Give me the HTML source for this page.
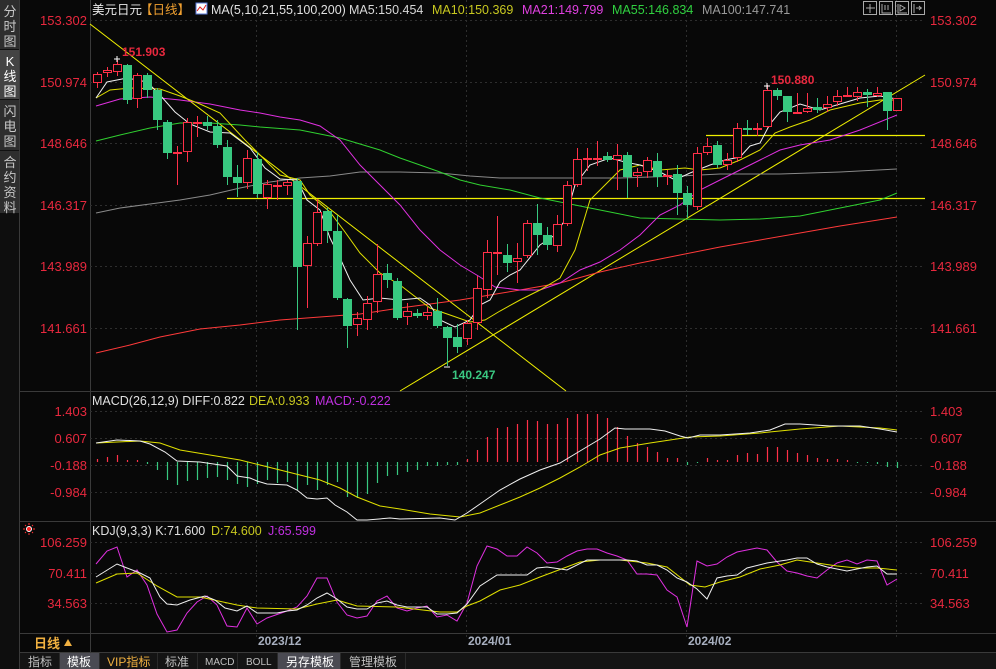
<!DOCTYPE html>
<html><head><meta charset="utf-8">
<style>
html,body{margin:0;padding:0;background:#080808;}
body{width:996px;height:669px;overflow:hidden;position:relative;font-family:"Liberation Sans","Noto Sans CJK SC",sans-serif;}
svg{position:absolute;left:0;top:0;}
text{font-family:"Liberation Sans","Noto Sans CJK SC",sans-serif;}
.ax{fill:#e8283e;font-size:13px;}
</style></head><body>
<svg width="996" height="669" viewBox="0 0 996 669" xmlns="http://www.w3.org/2000/svg">
<rect width="996" height="669" fill="#080808"/>
<rect x="0" y="0" width="20" height="669" fill="#2e2e2e"/>
<rect x="0" y="50" width="20" height="49" fill="#444"/>
<line x1="0" y1="49.5" x2="20" y2="49.5" stroke="#111"/>
<line x1="0" y1="99.5" x2="20" y2="99.5" stroke="#111"/>
<line x1="0" y1="150.5" x2="20" y2="150.5" stroke="#111"/>
<rect x="0" y="213" width="20" height="456" fill="#0e0e0e"/>
<rect x="19" y="0" width="1" height="669" fill="#3a3a3a"/>
<g fill="#c8c8c8" font-size="13" text-anchor="middle">
<text x="10" y="16">分</text><text x="10" y="31">时</text><text x="10" y="46">图</text>
<text x="10" y="66" fill="#fff">K</text><text x="10" y="81" fill="#fff">线</text><text x="10" y="96" fill="#fff">图</text>
<text x="10" y="116">闪</text><text x="10" y="131">电</text><text x="10" y="146">图</text>
<text x="10" y="167">合</text><text x="10" y="182">约</text><text x="10" y="197">资</text><text x="10" y="212">料</text>
</g>
<g stroke="#3a3a3a" fill="none">
<line x1="90.5" y1="0" x2="90.5" y2="652"/>
<line x1="20" y1="391.5" x2="996" y2="391.5"/>
<line x1="20" y1="521.5" x2="996" y2="521.5"/>
<line x1="20" y1="633.5" x2="996" y2="633.5"/>
<line x1="20" y1="652.5" x2="996" y2="652.5"/>
</g>
<g stroke="#2e2e2e" stroke-dasharray="2,3" fill="none">
<line x1="90" y1="20.5" x2="925" y2="20.5"/><line x1="90" y1="82.5" x2="925" y2="82.5"/>
<line x1="90" y1="143.5" x2="925" y2="143.5"/><line x1="90" y1="205.5" x2="925" y2="205.5"/>
<line x1="90" y1="266.5" x2="925" y2="266.5"/><line x1="90" y1="328.5" x2="925" y2="328.5"/>
<line x1="90" y1="411.5" x2="925" y2="411.5"/><line x1="90" y1="438.5" x2="925" y2="438.5"/>
<line x1="90" y1="465.5" x2="925" y2="465.5"/><line x1="90" y1="492.5" x2="925" y2="492.5"/>
<line x1="90" y1="542.5" x2="925" y2="542.5"/><line x1="90" y1="573.5" x2="925" y2="573.5"/><line x1="90" y1="603.5" x2="925" y2="603.5"/>
<line x1="256.5" y1="0" x2="256.5" y2="640"/><line x1="466.5" y1="0" x2="466.5" y2="640"/><line x1="686.5" y1="0" x2="686.5" y2="640"/><line x1="896.5" y1="0" x2="896.5" y2="640"/>
</g>
<g class="ax" text-anchor="end">
<text x="87" y="25">153.302</text><text x="87" y="87">150.974</text><text x="87" y="148">148.646</text><text x="87" y="210">146.317</text><text x="87" y="271">143.989</text><text x="87" y="333">141.661</text>
<text x="87" y="416">1.403</text><text x="87" y="443">0.607</text><text x="87" y="470">-0.188</text><text x="87" y="497">-0.984</text>
<text x="87" y="547">106.259</text><text x="87" y="578">70.411</text><text x="87" y="608">34.563</text>
</g>
<g class="ax">
<text x="930" y="25">153.302</text><text x="930" y="87">150.974</text><text x="930" y="148">148.646</text><text x="930" y="210">146.317</text><text x="930" y="271">143.989</text><text x="930" y="333">141.661</text>
<text x="930" y="416">1.403</text><text x="930" y="443">0.607</text><text x="930" y="470">-0.188</text><text x="930" y="497">-0.984</text>
<text x="930" y="547">106.259</text><text x="930" y="578">70.411</text><text x="930" y="608">34.563</text>
</g>
<text x="92" y="14" font-size="12.5" fill="#e8e8e8">美元日元</text>
<text x="140" y="14" font-size="12.5" fill="#f0a030">【日线】</text>
<rect x="196" y="3" width="11" height="11" fill="#fff" stroke="#5a7ad8"/>
<polyline points="197,11 200,7 203,10 206,5" stroke="#e02020" fill="none"/>
<text x="211" y="14" font-size="12.5" fill="#e0e0e0">MA(5,10,21,55,100,200)</text>
<text x="349" y="14" font-size="12.5" fill="#d8d8d8">MA5:150.454</text>
<text x="432" y="14" font-size="12.5" fill="#c8c820">MA10:150.369</text>
<text x="522" y="14" font-size="12.5" fill="#e040e0">MA21:149.799</text>
<text x="612" y="14" font-size="12.5" fill="#30d040">MA55:146.834</text>
<text x="702" y="14" font-size="12.5" fill="#9a9a9a">MA100:147.741</text>
<g stroke="#aaa" fill="none">
<rect x="863.5" y="1.5" width="13" height="13"/><rect x="879.5" y="1.5" width="13" height="13"/><rect x="895.5" y="1.5" width="13" height="13"/><rect x="911.5" y="1.5" width="13" height="13"/>
<path d="M870 4v9M866 8h9"/><path d="M882 4v9h9M885 5v5M888 5v5"/><path d="M898 4v9h9M900 5l5 3-5 3z"/><path d="M914 4v9M916 8h6M919 6l2 2-2 2"/>
</g>
<g stroke="#f0f000" fill="none" stroke-width="1">
<line x1="90" y1="24" x2="566" y2="391"/>
<line x1="400" y1="391" x2="925" y2="75"/>
<line x1="227" y1="198.5" x2="925" y2="198.5" stroke-width="1.3"/>
<line x1="706" y1="135.5" x2="925" y2="135.5" stroke-width="1.3"/>
</g>
<g fill="none" stroke-width="1">
<polyline stroke="#ff3a3a" points="96,353 130,345 160,337 200,329 240,325 280,320 320,317 360,314 400,308 430,304 460,300 490,295 520,290 560,283 600,272 640,263 680,255 720,247 760,240 800,233 840,226 897,217"/>
<polyline stroke="#8a8a8a" points="96,213 120,208 150,204 180,200 210,195 240,188 270,182 300,178 330,176 360,172 400,172 440,173 470,176 500,178 560,178 620,178 680,176 720,174 780,174 840,172 897,169"/>
<polyline stroke="#30d030" points="96,141 120,135 150,128 180,123 210,123 240,125 260,127 300,130 340,138 360,144 380,150 400,158 420,165 440,172 460,180 480,185 510,190 540,198 560,202 590,208 620,214 640,218 680,219 720,220 760,219 800,216 840,208 880,200 897,193"/>
<polyline stroke="#e030e0" points="96,106 120,99 150,97 180,100 210,104 240,110 260,113 280,117 300,120 320,126 340,140 360,165 380,185 400,205 420,230 440,250 460,265 480,277 495,287 520,290 540,290 560,283 580,270 600,262 620,250 640,235 660,215 680,205 700,190 720,180 740,170 760,160 780,150 800,145 830,140 860,130 897,115"/>
<polyline stroke="#e0e000" points="96,98 110,90 130,88 160,89 180,96 200,104 220,113 245,140 265,160 280,175 300,180 310,195 330,212 345,232 360,253 380,273 400,285 430,308 450,315 470,322 485,320 500,311 520,300 540,290 560,278 575,250 590,200 620,170 640,165 660,170 685,168 700,170 720,168 740,160 760,150 775,133 790,127 810,120 830,110 860,103 880,100 897,100"/>
<polyline stroke="#f0f0f0" points="96,98 107,82 127,78 147,82 160,95 175,112 190,124 210,132 230,133 250,148 265,168 280,179 297,180 307,200 320,210 330,238 340,258 350,280 363,300 380,298 400,300 420,298 430,305 440,320 455,327 470,320 480,305 490,300 500,282 510,275 520,270 540,245 555,235 565,220 575,185 590,165 610,158 625,162 640,165 660,172 675,180 690,173 710,165 725,160 740,157 750,146 760,143 770,124 780,112 800,104 820,110 840,104 860,98 880,96 897,99"/>
</g>
<!-- red wicks -->
<path stroke="#ff3048" fill="none" d="M97.5 72V88M107.5 67V77M117.5 60V76M137.5 73V108M177.5 146V185M187.5 118V162M197.5 116V137M247.5 150V189M267.5 180V209M277.5 180V200M287.5 180V195M307.5 236V308M317.5 199V246M357.5 312V336M367.5 296V330M377.5 244V313M407.5 303V325M427.5 307V320M467.5 320V345M477.5 276V330M487.5 240V298M497.5 216V275M517.5 243V283M527.5 220V258M557.5 215V252M567.5 181V226M577.5 148V187M587.5 148V171M597.5 141V166M617.5 144V190M637.5 168V187M647.5 157V178M667.5 170V185M697.5 147V210M707.5 138V155M727.5 153V170M737.5 123V162M757.5 123V136M767.5 85V128M797.5 93V113M807.5 93V113M827.5 96V112M837.5 90V106M847.5 87V97M857.5 87V101M877.5 87V97M897.5 98V111"/>
<!-- red bodies -->
<path stroke="#ff3048" fill="#080808" d="M93.5 74.5h8v8h-8zM103.5 70.5h8v2h-8zM113.5 64.5h8v7h-8zM133.5 75.5h8v23h-8zM183.5 122.5h8v29h-8zM243.5 158.5h8v24h-8zM263.5 184.5h8v13h-8zM283.5 182.5h8v3h-8zM303.5 243.5h8v22h-8zM313.5 212.5h8v31h-8zM353.5 318.5h8v6h-8zM363.5 303.5h8v16h-8zM373.5 274.5h8v27h-8zM403.5 311.5h8v5h-8zM423.5 312.5h8v3h-8zM463.5 323.5h8v15h-8zM473.5 288.5h8v34h-8zM483.5 252.5h8v37h-8zM513.5 258.5h8v3h-8zM523.5 223.5h8v32h-8zM553.5 224.5h8v21h-8zM563.5 185.5h8v38h-8zM573.5 159.5h8v25h-8zM613.5 155.5h8v4h-8zM633.5 172.5h8v3h-8zM643.5 160.5h8v11h-8zM693.5 153.5h8v53h-8zM703.5 146.5h8v6h-8zM723.5 160.5h8v4h-8zM733.5 128.5h8v29h-8zM763.5 90.5h8v36h-8zM803.5 108.5h8v3h-8zM823.5 104.5h8v3h-8zM833.5 96.5h8v5h-8zM853.5 92.5h8v4h-8zM873.5 93.5h8v2h-8zM893.5 98.5h8v12h-8z"/>
<!-- red doji -->
<path fill="#ff3048" d="M173 152h9v2h-9zM193 122h9v2h-9zM273 185h9v2h-9zM493 252h9v2h-9zM583 158h9v2h-9zM593 158h9v2h-9zM663 175h9v2h-9zM753 128h9v2h-9zM793 112h9v2h-9zM843 95h9v2h-9z"/>
<!-- green -->
<path stroke="#38c880" fill="none" d="M127.5 64V104M147.5 73V98M157.5 88V130M167.5 120V159M207.5 116V130M217.5 120V148M227.5 140V185M237.5 165V197M257.5 152V198M297.5 178V330M327.5 208V243M337.5 215V300M347.5 298V348M387.5 264V288M397.5 278V320M417.5 309V318M437.5 298V328M447.5 326V366M457.5 324V353M507.5 244V272M537.5 204V255M547.5 227V250M607.5 152V162M627.5 152V198M657.5 153V187M677.5 165V215M687.5 186V218M717.5 141V168M747.5 120V135M777.5 88V100M787.5 96V122M817.5 98V113M867.5 89V107M887.5 92V130"/>
<path fill="#38c880" d="M123 65h9v35h-9zM143 75h9v15h-9zM153 90h9v30h-9zM163 122h9v31h-9zM203 122h9v4h-9zM213 126h9v19h-9zM223 147h9v30h-9zM233 177h9v6h-9zM253 159h9v35h-9zM293 181h9v86h-9zM323 211h9v20h-9zM333 231h9v67h-9zM343 299h9v27h-9zM383 273h9v7h-9zM393 281h9v37h-9zM413 313h9v3h-9zM433 311h9v15h-9zM443 327h9v11h-9zM453 337h9v10h-9zM503 255h9v8h-9zM533 223h9v12h-9zM543 235h9v10h-9zM603 156h9v4h-9zM623 155h9v22h-9zM653 161h9v16h-9zM673 174h9v19h-9zM683 193h9v12h-9zM713 145h9v20h-9zM743 128h9v2h-9zM773 90h9v6h-9zM783 96h9v16h-9zM813 107h9v3h-9zM863 92h9v3h-9zM883 92h9v19h-9z"/>
<text x="122" y="56" font-size="12" font-weight="bold" fill="#e8283e">151.903</text>
<text x="771" y="84" font-size="12" font-weight="bold" fill="#e8283e">150.880</text>
<text x="452" y="379" font-size="12" font-weight="bold" fill="#3ac882">140.247</text>
<path d="M114 59h6M117 56v6" stroke="#fff"/><path d="M764 86h6M767 83v6" stroke="#fff"/><path d="M444 367h6" stroke="#fff"/>
<text x="92" y="405" font-size="12.5" fill="#e0e0e0">MACD(26,12,9) DIFF:0.822</text>
<text x="249" y="405" font-size="12.5" fill="#c8c820">DEA:0.933</text>
<text x="315" y="405" font-size="12.5" fill="#c030e0">MACD:-0.222</text>
<path stroke="#ff3048" stroke-width="1.2" fill="none" d="M97.5 462V459M107.5 462V457M117.5 462V455M127.5 462V460M137.5 462V460M467.5 462V459M477.5 462V450M487.5 462V437M497.5 462V428M507.5 462V427M517.5 462V424M527.5 462V420M537.5 462V421M547.5 462V424M557.5 462V424M567.5 462V418M577.5 462V414M587.5 462V414M597.5 462V414M607.5 462V418M617.5 462V427M627.5 462V436M637.5 462V443M647.5 462V447M657.5 462V452M667.5 462V458M677.5 462V458M707.5 462V458M717.5 462V460M727.5 462V460M737.5 462V455M747.5 462V453M757.5 462V454M767.5 462V447M777.5 462V447M787.5 462V450M797.5 462V453M807.5 462V455M817.5 462V458M827.5 462V459M837.5 462V459M847.5 462V460"/>
<path stroke="#38c880" stroke-width="1.2" fill="none" d="M147.5 462V464M157.5 462V470M167.5 462V480M177.5 462V485M187.5 462V481M197.5 462V480M207.5 462V478M217.5 462V477M227.5 462V480M237.5 462V484M247.5 462V487M257.5 462V484M267.5 462V480M277.5 462V483M287.5 462V482M297.5 462V490M307.5 462V485M317.5 462V490M327.5 462V485M337.5 462V482M347.5 462V497M357.5 462V498M367.5 462V494M377.5 462V483M387.5 462V476M397.5 462V475M407.5 462V472M417.5 462V470M427.5 462V466M437.5 462V466M447.5 462V465M457.5 462V465M687.5 462V465M697.5 462V463M857.5 462V463M867.5 462V463M877.5 462V464M887.5 462V467M897.5 462V468"/>
<g fill="none">
<polyline stroke="#e0e000" points="96,443 140,441 160,443 180,450 210,455 240,460 260,465 280,470 300,475 320,480 340,488 357,497 380,506 400,509 430,514 460,517 480,513 500,505 520,497 540,488 560,478 580,467 600,455 620,448 650,443 690,437 720,436 760,433 800,429 840,426 880,428 897,430"/>
<polyline stroke="#f0f0f0" points="96,443 117,440 140,441 150,444 165,452 177,461 200,462 227,466 237,476 250,478 257,481 267,484 287,485 297,490 307,498 317,499 327,498 335,505 347,512 357,520 367,520 390,518 400,519 440,518 455,520 467,513 480,504 500,490 520,479 540,470 560,463 580,451 600,439 615,428 625,429 650,429 665,431 680,436 688,438 700,435 720,435 750,433 770,430 785,424 800,424 815,425 830,426 860,426 880,429 897,432"/>
</g>
<circle cx="29" cy="529" r="2.5" fill="#ff2020" stroke="#fff"/>
<g stroke="#ff3030"><path d="M29 523v2M29 533v2M23 529h2M33 529h2M25 525l1 1M33 525l-1 1M25 533l1-1M33 533l-1-1"/></g>
<text x="92" y="535" font-size="12.5" fill="#e0e0e0">KDJ(9,3,3) K:71.600</text>
<text x="211" y="535" font-size="12.5" fill="#c8c820">D:74.600</text>
<text x="268" y="535" font-size="12.5" fill="#c030e0">J:65.599</text>
<g fill="none">
<polyline stroke="#e030e0" points="96,564 107,551 117,547 127,577 137,570 147,585 157,614 167,632 177,630 187,613 197,602 207,596 217,605 227,626 237,627 247,608 257,624 267,618 287,611 297,607 307,596 317,578 327,578 337,602 347,615 357,618 367,616 377,601 387,596 397,608 407,611 417,608 427,606 437,617 447,615 457,621 467,603 477,566 487,546 497,549 507,556 517,556 527,547 537,553 547,563 557,562 567,556 577,551 587,549 597,549 607,553 617,556 627,560 637,574 647,574 657,575 667,590 677,597 687,627 697,561 707,566 717,564 727,557 737,552 747,550 757,548 767,550 777,562 787,571 797,573 807,576 817,578 827,570 837,563 847,560 857,564 867,560 877,561 887,585 897,579"/>
<polyline stroke="#e0e000" points="96,583 117,574 137,573 157,586 177,597 200,597 237,605 257,608 297,609 317,604 337,600 357,606 397,607 440,612 457,612 467,606 480,601 500,590 520,585 540,577 580,562 600,560 620,560 647,563 667,567 690,585 705,587 720,582 740,577 760,569 780,565 797,560 817,563 837,566 857,568 877,568 897,570"/>
<polyline stroke="#f0f0f0" points="96,577 117,564 127,568 140,573 150,578 160,597 167,604 177,605 190,600 205,596 215,600 225,608 237,611 247,606 257,613 277,613 287,611 297,610 307,605 317,598 327,593 337,599 347,607 357,609 367,609 377,603 387,601 397,605 407,607 427,607 437,614 447,614 457,613 467,604 480,586 497,575 517,575 527,575 537,568 547,567 567,570 587,560 607,560 627,560 637,561 647,565 657,565 667,570 677,578 687,582 697,589 707,599 717,578 727,576 737,575 747,568 767,563 787,560 797,558 807,558 817,564 827,567 837,569 847,571 857,569 867,567 877,566 887,574 897,574"/>
</g>
<text x="34" y="648" font-size="13" font-weight="bold" fill="#f0b040">日线</text>
<path d="M64 646l4-7 4 7z" fill="#f0b040"/>
<g font-size="12" font-weight="bold" fill="#a8b0c0">
<text x="258" y="645">2023/12</text><text x="468" y="645">2024/01</text><text x="688" y="645">2024/02</text>
</g>
<rect x="20" y="653" width="976" height="16" fill="#141414"/>
<rect x="60" y="653" width="39" height="16" fill="#4a4a52"/>
<rect x="278" y="653" width="62" height="16" fill="#4a4a52"/>
<g stroke="#2a2a2a"><path d="M59.5 653v16M99.5 653v16M157.5 653v16M197.5 653v16M237.5 653v16M277.5 653v16M340.5 653v16M405.5 653v16"/></g>
<g font-size="12" fill="#c0c0c0">
<text x="28" y="666">指标</text>
<text x="67" y="666" fill="#fff">模板</text>
<text x="107" y="666" fill="#f0b040">VIP指标</text>
<text x="165" y="666">标准</text>
<text x="205" y="665" font-size="10">MACD</text>
<text x="246" y="665" font-size="10">BOLL</text>
<text x="286" y="666" fill="#fff">另存模板</text>
<text x="349" y="666">管理模板</text>
</g>
</svg>
</body></html>
